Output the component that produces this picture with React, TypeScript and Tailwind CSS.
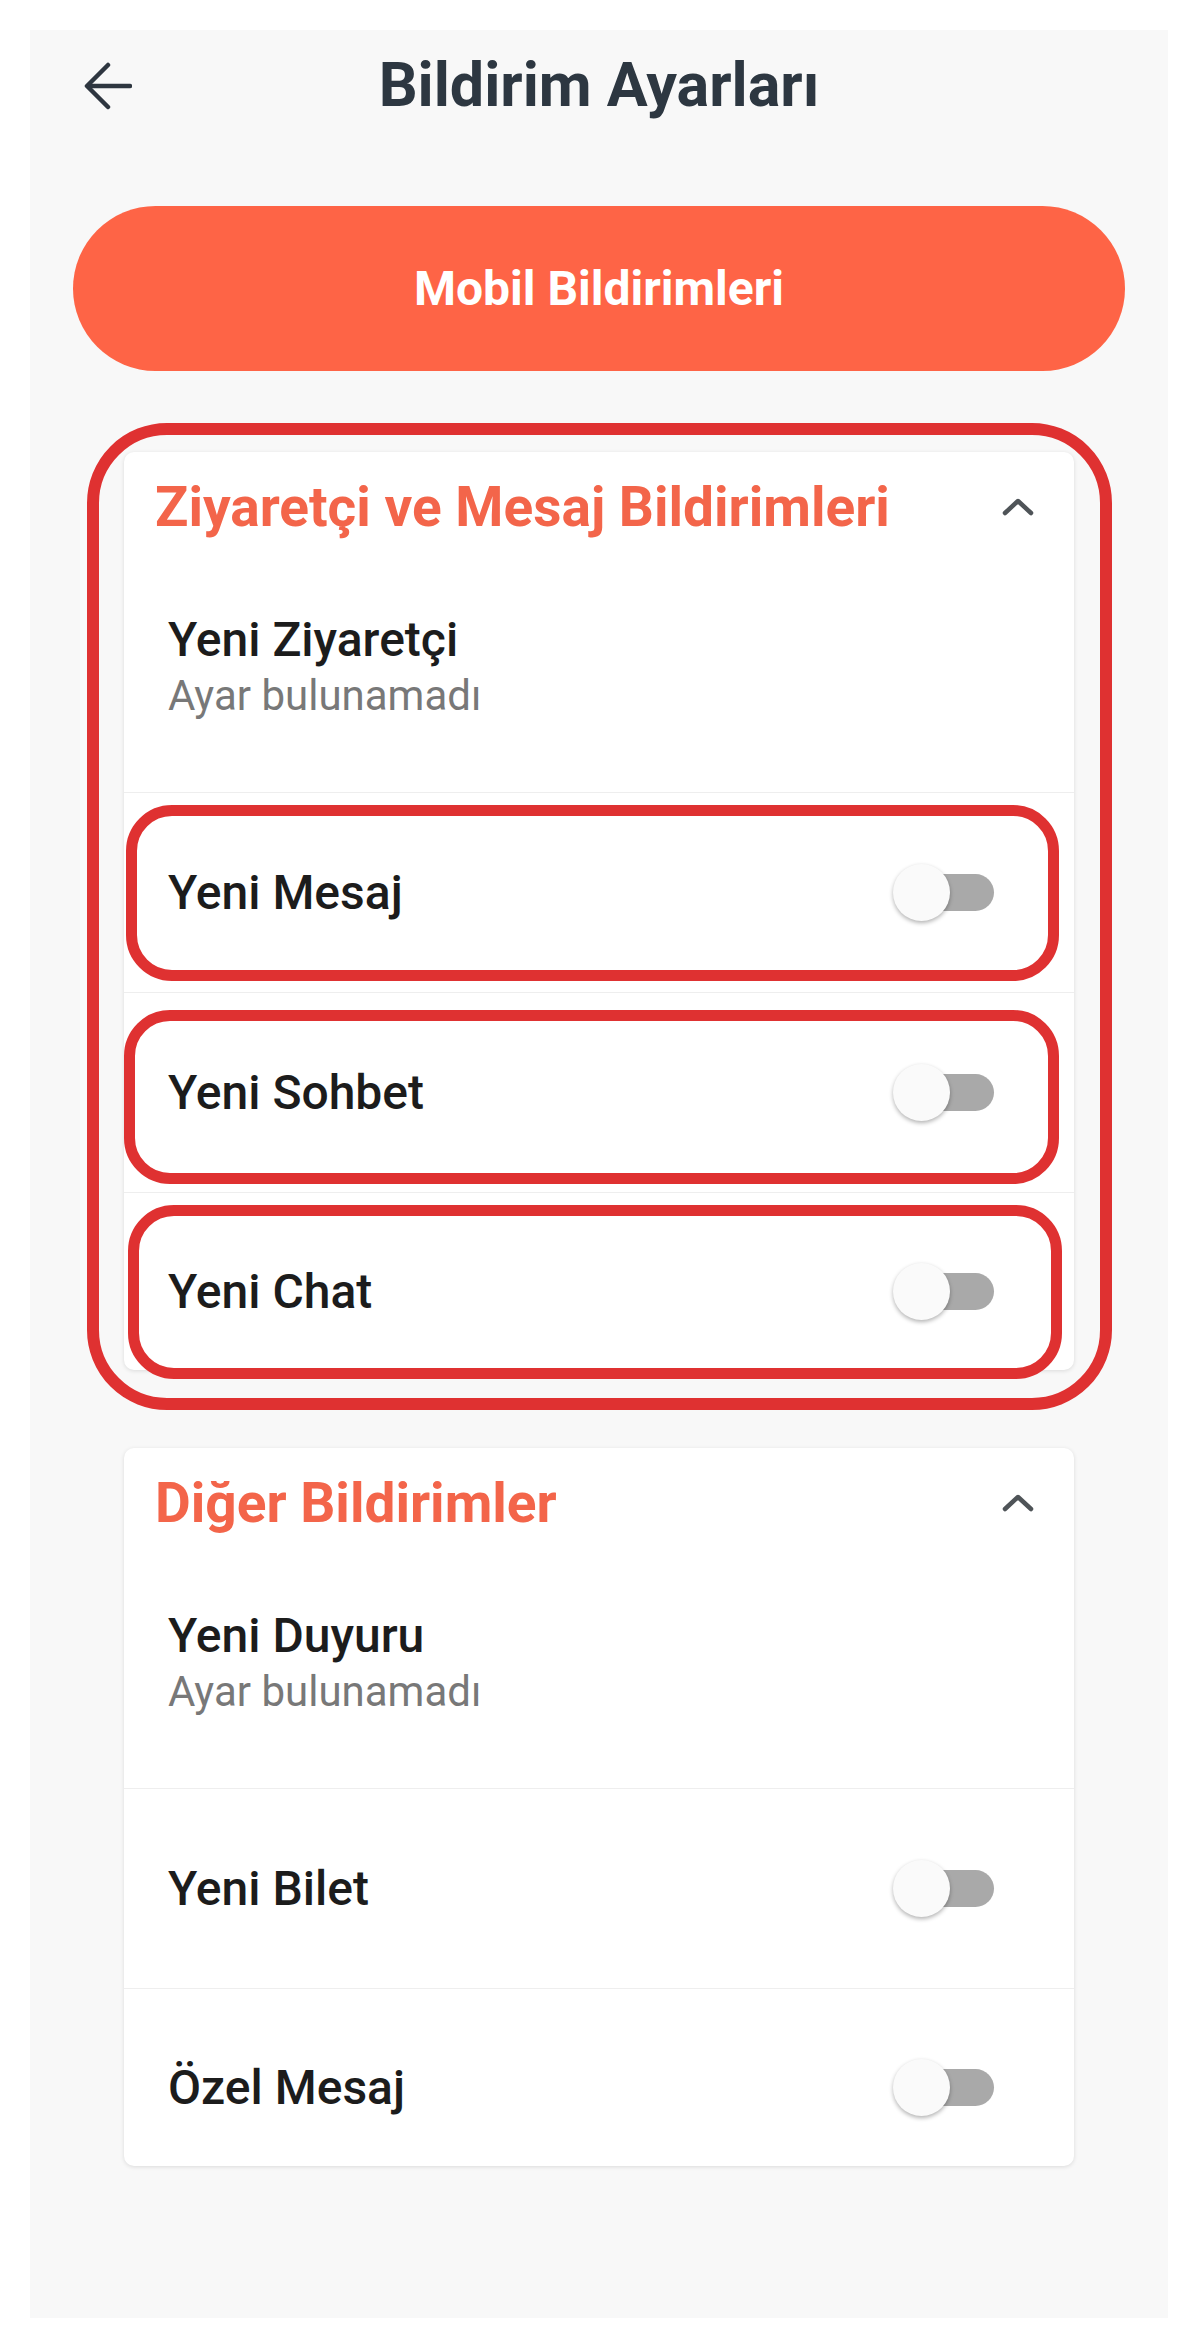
import React from "react";

function Toggle() {
  return (
    <div className="relative w-[101px] h-[57px] shrink-0">
      <div className="absolute right-0 top-[10px] w-[97px] h-[37px] rounded-full bg-[#a9a9a9]" />
      <div className="absolute left-0 top-0 w-[57px] h-[57px] rounded-full bg-[#fafafa] shadow-[0_2px_4px_rgba(0,0,0,0.3)]" />
    </div>
  );
}

function Chevron() {
  return (
    <svg width="36" height="20" viewBox="0 0 36 20" fill="none">
      <polyline points="5,16 18,4 31,16" stroke="#4f5458" strokeWidth="4.5" strokeLinecap="round" strokeLinejoin="round" />
    </svg>
  );
}

function InfoRow({ title }: { title: string }) {
  return (
    <div className="h-[230px] pl-[44px] pt-[50px] flex flex-col">
      <div className="text-[48px] leading-[56px] font-medium text-[#1c1c1c]">{title}</div>
      <div className="text-[42px] leading-[48px] mt-[4px] text-[#787878]">Ayar bulunamadı</div>
    </div>
  );
}

function ToggleRow({ title, last }: { title: string; last?: boolean }) {
  return (
    <div
      className={
        last
          ? "h-[178px] border-t border-[#eeeeee] pl-[44px] pr-[80px] pt-[70px] flex items-start justify-between"
          : "h-[200px] border-t border-[#eeeeee] pl-[44px] pr-[80px] flex items-center justify-between"
      }
    >
      <div className="text-[48px] leading-[57px] font-medium text-[#1c1c1c]">{title}</div>
      <Toggle />
    </div>
  );
}

function Card({ title, info, toggles }: { title: string; info: string; toggles: string[] }) {
  return (
    <div className="mx-[94px] w-[950px] bg-white rounded-[10px] shadow-[0_1px_4px_rgba(0,0,0,0.12)] overflow-hidden">
      <div className="h-[110px] pl-[31px] pr-[38px] flex items-center justify-between">
        <div className="text-[55px] leading-[64px] font-bold text-[#f3654a]">{title}</div>
        <Chevron />
      </div>
      <InfoRow title={info} />
      {toggles.map((t, i) => (
        <ToggleRow key={t} title={t} last={i === toggles.length - 1} />
      ))}
    </div>
  );
}

export default function App() {
  return (
    <div
      className="relative w-full h-[2349px] bg-white pt-[30px]"
      style={{ fontFamily: "Roboto, 'Noto Sans', sans-serif" }}
    >
      <div className="ml-[30px] w-[1138px] h-[2288px] bg-[#f8f8f8] flex flex-col">
        <div className="relative h-[110px] flex items-center justify-center">
          <svg
            className="absolute left-[54px] top-[32px]"
            width="48"
            height="48"
            viewBox="0 0 48 48"
            fill="none"
          >
            <line x1="4" y1="24" x2="46" y2="24" stroke="#2e3640" strokeWidth="4.5" strokeLinecap="round" />
            <polyline points="24,3 3,24 24,45" stroke="#2e3640" strokeWidth="4.5" strokeLinecap="round" strokeLinejoin="round" />
          </svg>
          <div className="text-[61px] leading-[70px] font-bold text-[#2d3741]">Bildirim Ayarları</div>
        </div>

        <div className="mt-[66px] ml-[43px] w-[1052px] h-[165px] rounded-full bg-[#fe6446] flex items-center justify-center">
          <span className="text-[48px] font-bold text-white">Mobil Bildirimleri</span>
        </div>

        <div className="mt-[81px]">
          <Card
            title="Ziyaretçi ve Mesaj Bildirimleri"
            info="Yeni Ziyaretçi"
            toggles={["Yeni Mesaj", "Yeni Sohbet", "Yeni Chat"]}
          />
        </div>

        <div className="mt-[78px]">
          <Card title="Diğer Bildirimler" info="Yeni Duyuru" toggles={["Yeni Bilet", "Özel Mesaj"]} />
        </div>
      </div>

      {/* annotation outlines */}
      <div className="absolute left-[87px] top-[423px] w-[1025px] h-[987px] rounded-[80px] border-[12px] border-[#df3131] pointer-events-none" />
      <div className="absolute left-[126px] top-[805px] w-[933px] h-[176px] rounded-[46px] border-[11px] border-[#df3131] pointer-events-none" />
      <div className="absolute left-[124px] top-[1010px] w-[935px] h-[174px] rounded-[46px] border-[11px] border-[#df3131] pointer-events-none" />
      <div className="absolute left-[128px] top-[1205px] w-[934px] h-[174px] rounded-[46px] border-[11px] border-[#df3131] pointer-events-none" />
    </div>
  );
}
